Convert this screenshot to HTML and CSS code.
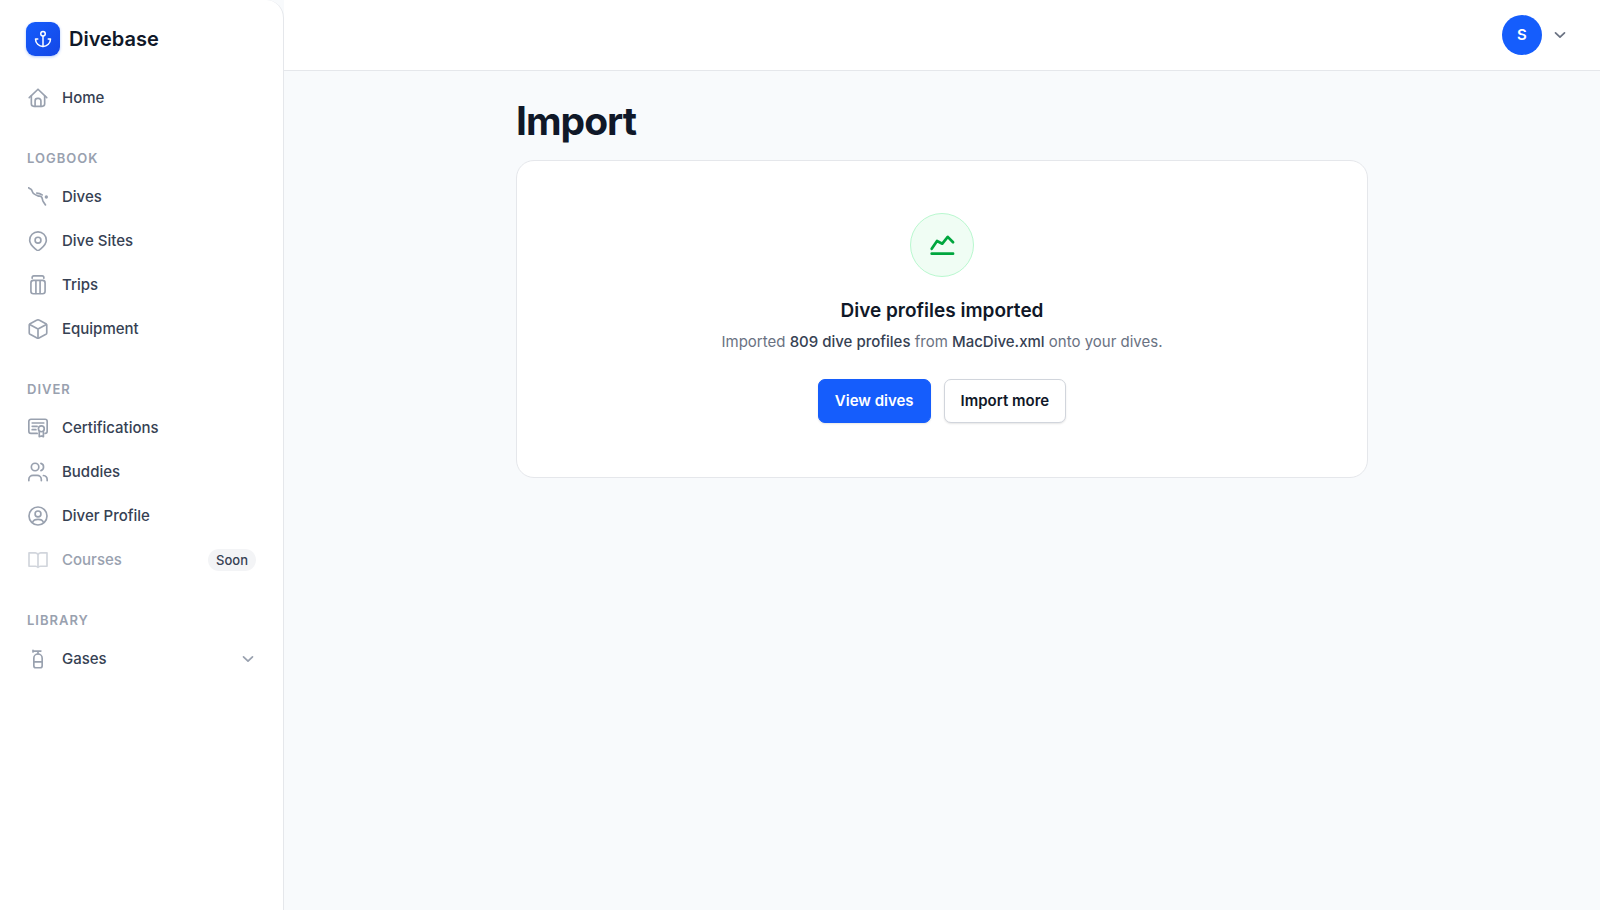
FILE: index.html
```html
<!DOCTYPE html>
<html lang="en">
<head>
  <meta charset="UTF-8" />
  <meta name="viewport" content="width=device-width, initial-scale=1" />
  <title>Import - Divebase</title>
  <link rel="stylesheet" href="styles.css">
</head>
<body>
  <div class="layout">
    <aside class="sidebar">
      <a class="brand" href="#">
        <span class="brand-mark">
          <svg viewBox="0 0 24 24"><circle cx="12" cy="5" r="3"/><path d="M12 22V8"/><path d="M5 12H2a10 10 0 0 0 20 0h-3"/></svg>
        </span>
        Divebase
      </a>

      <nav class="nav">
        <a class="nav-item" href="#">
          <svg class="icon" viewBox="0 0 24 24"><path d="M1.500 11.500 12 1.500l10.500 10"/><path d="M4 9.500V19a3 3 0 0 0 3 3h10a3 3 0 0 0 3-3V9.500"/><path d="M8.500 22v-6.500a3 3 0 0 1 3-3h1a3 3 0 0 1 3 3V22"/></svg>
          Home
        </a>

        <h2 class="nav-label">Logbook</h2>
        <a class="nav-item" href="#">
          <svg class="icon" viewBox="0 0 24 24"><path d="M.8.8C1.500 2 3 2.200 4 3.200c1.200 1.300 1 3.500 2.800 4.800 1.700 1.300 3.200 2 5.200 2.600s3.700.4 4.500 1.700c.8 1.400.7 3.200 1.500 4.700l3 4.500"/><path d="M10.500 7.300c2.500 0 4.500.7 6.500 2.200"/><circle cx="22" cy="12" r="1"/></svg>
          Dives
        </a>
        <a class="nav-item" href="#">
          <svg class="icon" viewBox="0 0 24 24"><path d="M22 11c0 5.500-5.500 9.200-8 11.500a3 3 0 0 1-4 0C7.500 20.200 2 16.500 2 11a10 10 0 0 1 20 0Z"/><circle cx="12" cy="11" r="3.500"/></svg>
          Dive Sites
        </a>
        <a class="nav-item" href="#">
          <svg class="icon" viewBox="0 0 24 24"><rect x="3.500" y="6.500" width="17" height="16" rx="3"/><path d="M5 4V3a2 2 0 0 1 2-2h10a2 2 0 0 1 2 2v1M9.500 7v15M14.500 7v15"/></svg>
          Trips
        </a>
        <a class="nav-item" href="#">
          <svg class="icon" viewBox="0 0 24 24"><path d="M10.800 1.300 2.500 5.600a2 2 0 0 0-1 1.700v9.400a2 2 0 0 0 1 1.700l8.300 4.300a2.500 2.500 0 0 0 2.400 0l8.300-4.300a2 2 0 0 0 1-1.700V7.300a2 2 0 0 0-1-1.700l-8.300-4.300a2.500 2.500 0 0 0-2.400 0Z"/><path d="m2 6.500 10 5.500 10-5.500M12 22.500V12"/></svg>
          Equipment
        </a>

        <h2 class="nav-label">Diver</h2>
        <a class="nav-item" href="#">
          <svg class="icon" viewBox="0 0 24 24"><path d="M11 18.500H3.500a2.500 2.500 0 0 1-2.500-2.500V4a2.500 2.500 0 0 1 2.500-2.500h17A2.500 2.500 0 0 1 23 4v12a2.500 2.500 0 0 1-2.500 2.500"/><path d="M5 6h14M5 10h6M5 14h4.500"/><circle cx="16" cy="13" r="3.500"/><path d="M13.500 16.500v6l2.500-1 2.500 1v-6"/></svg>
          Certifications
        </a>
        <a class="nav-item" href="#">
          <svg class="icon" viewBox="0 0 24 24"><circle cx="8.500" cy="6" r="4.500"/><path d="M1 22.500V21a5 5 0 0 1 5-5h5a5 5 0 0 1 5 5v1.500M15.500 1.700a4.500 4.500 0 0 1 0 8.600M18.500 16.200A5 5 0 0 1 23 21v1.500"/></svg>
          Buddies
        </a>
        <a class="nav-item" href="#">
          <svg class="icon" viewBox="0 0 24 24"><circle cx="12" cy="12" r="10.800"/><circle cx="12" cy="9.500" r="3.500"/><path d="M5.500 19.500c1-2.500 3.500-3.500 6.500-3.500s5.500 1 6.500 3.500"/></svg>
          Diver Profile
        </a>
        <span class="nav-item disabled">
          <svg class="icon" viewBox="0 0 24 24"><path d="M12 6v15M1.200 3.500h7.300A3.500 3.500 0 0 1 12 6a3.500 3.500 0 0 1 3.500-2.500h7.300v16h-7.800c-1.500 0-2.500.5-3 1.500-.5-1-1.500-1.500-3-1.500H1.200Z"/></svg>
          Courses
          <span class="badge">Soon</span>
        </span>

        <h2 class="nav-label">Library</h2>
        <button class="nav-item" type="button" aria-expanded="false">
          <svg class="icon" viewBox="0 0 24 24"><path d="M7 11a5 5 0 0 1 10 0v9a2.500 2.500 0 0 1-2.500 2.500h-5A2.500 2.500 0 0 1 7 20Z"/><path d="M7 15.500h10M12 6V2.500M6 2.500h9.500M6 1.500v2"/></svg>
          Gases
          <svg class="chevron" viewBox="0 0 12 8"><path d="M1.500 1.800 6 6.200l4.500-4.400"/></svg>
        </button>
      </nav>
    </aside>

    <div class="content">
      <header class="topbar">
        <button class="account" type="button" aria-label="Account menu">
          <span class="avatar">S</span>
          <svg class="chevron" viewBox="0 0 12 8"><path d="M1.500 1.800 6 6.200l4.500-4.400"/></svg>
        </button>
      </header>

      <main class="page">
        <h1>Import</h1>
        <section class="card">
          <span class="result-icon">
            <svg viewBox="0 0 24 24"><path d="m2.500 15.500 4.900-7.200 4.900 2.500 5-6.300 4.900 5"/><path d="M2.500 20h19.700"/></svg>
          </span>
          <h2 class="result-title">Dive profiles imported</h2>
          <p class="result-text">Imported <strong>809 dive profiles</strong> from <strong>MacDive.xml</strong> onto your dives.</p>
          <div class="actions">
            <button class="btn btn-primary" type="button">View dives</button>
            <button class="btn" type="button">Import more</button>
          </div>
        </section>
      </main>
    </div>
  </div>
</body>
</html>
```
FILE: styles.css
```css
* {
  box-sizing: border-box;
}
body {
  margin: 0;
  font-family: Inter, "Liberation Sans", sans-serif;
  font-size: 15px;
  line-height: 24px;
  background: #f8fafc;
  color: #101828;
}
h1, h2, p {
  margin: 0;
}
a {
  color: inherit;
  text-decoration: none;
}
button {
  font: inherit;
  color: inherit;
  cursor: pointer;
}
svg {
  display: block;
  flex: none;
  fill: none;
  stroke: currentColor;
  stroke-width: 2;
  stroke-linecap: round;
  stroke-linejoin: round;
}
.layout {
  display: flex;
  min-height: 100vh;
}

/* sidebar */
.sidebar {
  width: 284px;
  flex: none;
  padding: 22px 13px;
  background: #fff;
  border-right: 1px solid #e5e7eb;
  border-top-right-radius: 18px;
}
.brand {
  display: flex;
  align-items: center;
  gap: 9px;
  padding: 0 13px;
  font-size: 20px;
  font-weight: 600;
}
.brand-mark {
  display: grid;
  place-items: center;
  width: 34px;
  height: 34px;
  border-radius: 9px;
  background: linear-gradient(135deg, #155dfc, #1447e6);
  box-shadow: 0 1px 3px #155dfc55;
  color: #fff;
}
.brand-mark svg {
  width: 18px;
  height: 18px;
}
.nav {
  margin-top: 20px;
}
.nav-item {
  display: flex;
  align-items: center;
  gap: 14px;
  width: 100%;
  height: 44px;
  padding: 0 15px;
  border: 0;
  background: none;
  font-weight: 500;
  text-align: left;
  color: #364153;
}
.icon {
  width: 20px;
  height: 20px;
  color: #99a1af;
}
.nav-label {
  margin: 28px 14px 7px;
  font-size: 13px;
  line-height: 20px;
  font-weight: 600;
  letter-spacing: 1px;
  text-transform: uppercase;
  color: #99a1af;
}
.disabled {
  color: #99a1af;
}
.disabled .icon {
  color: #d1d5dc;
}
.badge {
  margin-left: auto;
  margin-right: -1px;
  padding: 1px 8px;
  border-radius: 12px;
  background: #f3f4f6;
  font-size: 13px;
  line-height: 20px;
  color: #364153;
}
.chevron {
  width: 12px;
  height: 8px;
  stroke-width: 1.7;
  color: #6a7282;
}
.nav-item .chevron {
  margin-left: auto;
  margin-right: 1px;
  color: #99a1af;
}

/* main area */
.content {
  flex: 1;
  min-width: 0;
}
.topbar {
  display: flex;
  align-items: center;
  justify-content: flex-end;
  height: 71px;
  padding: 0 34px;
  background: #fff;
  border-bottom: 1px solid #e5e7eb;
}
.account {
  display: flex;
  align-items: center;
  gap: 12px;
  padding: 0;
  border: 0;
  background: none;
}
.avatar {
  display: grid;
  place-items: center;
  width: 40px;
  height: 40px;
  border-radius: 50%;
  background: #155dfc;
  color: #fff;
  font-weight: 600;
}
.page {
  max-width: 888px;
  margin: 0 auto;
  padding: 26px 18px;
}
h1 {
  margin-bottom: 15px;
  font-size: 39px;
  line-height: 48px;
  font-weight: 700;
  letter-spacing: -1px;
}
.card {
  display: flex;
  flex-direction: column;
  align-items: center;
  padding: 52px 24px 54px;
  background: #fff;
  border: 1px solid #e5e7eb;
  border-radius: 18px;
  text-align: center;
}
.result-icon {
  display: grid;
  place-items: center;
  width: 64px;
  height: 64px;
  border: 1px solid #b9f8cf;
  border-radius: 50%;
  background: #f0fdf4;
  color: #00a63e;
}
.result-icon svg {
  width: 26px;
  height: 26px;
  stroke-width: 2.5;
}
.result-title {
  margin-top: 19px;
  font-size: 19px;
  line-height: 30px;
  font-weight: 600;
}
.result-text {
  margin-top: 4px;
  color: #6a7282;
}
.result-text strong {
  font-weight: 500;
  color: #364153;
}
.actions {
  display: flex;
  gap: 13px;
  margin-top: 25px;
}
.btn {
  height: 44px;
  padding: 0 16px;
  border: 1px solid #d1d5dc;
  border-radius: 7px;
  background: #fff;
  box-shadow: 0 1px 2px #0000001a;
  font-weight: 600;
}
.btn-primary {
  border-color: #155dfc;
  background: #155dfc;
  color: #fff;
}
```
